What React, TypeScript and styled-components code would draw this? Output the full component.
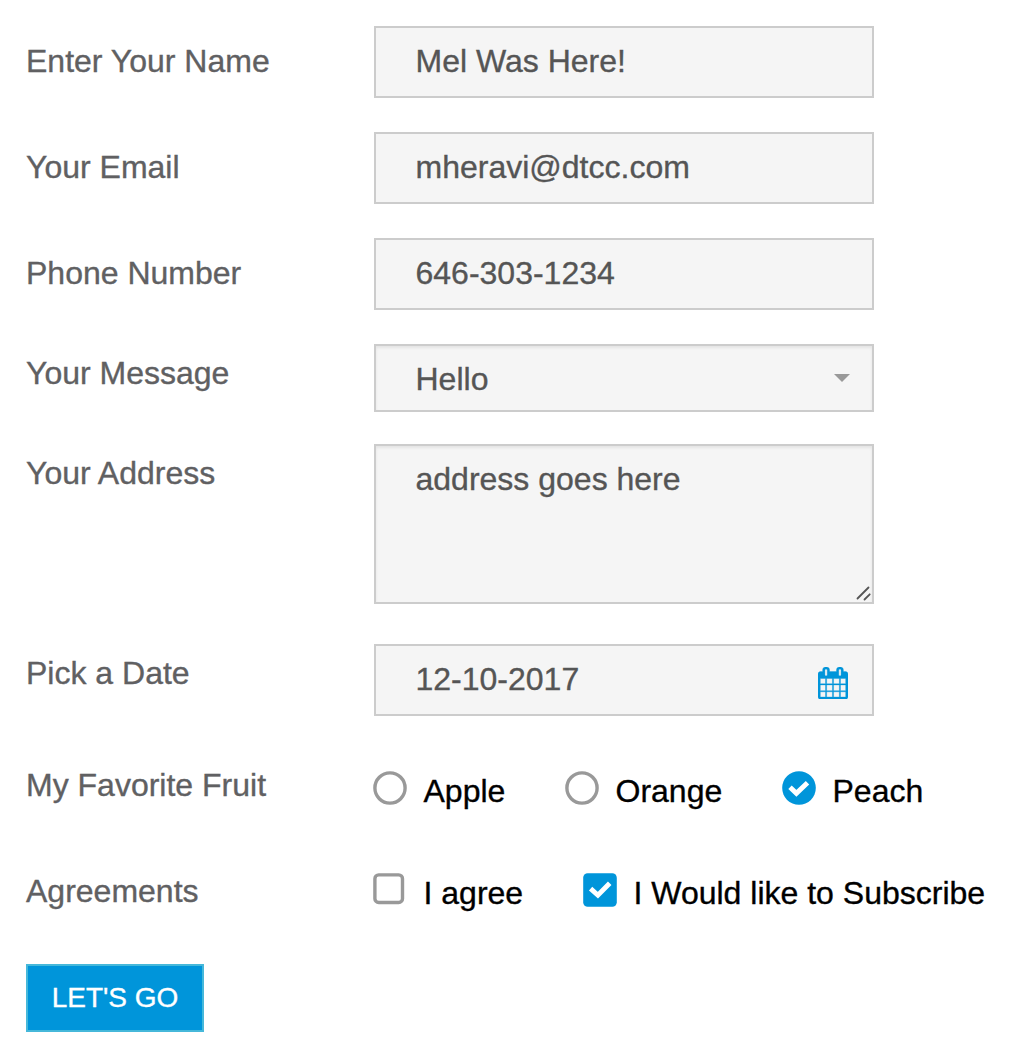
import React from "react";
import styled, { createGlobalStyle } from "styled-components";

const GlobalStyle = createGlobalStyle`
  body {
    margin: 0;
    background: #fff;
    font-family: "Liberation Sans", Arial, sans-serif;
    font-size: 32px;
    line-height: 36px;
    -webkit-text-stroke: 0.35px currentColor;
  }
`;

const Form = styled.main`
  box-sizing: border-box;
  width: 1032px;
  padding: 26px 0 28px 26px;
`;

const Row = styled.div<{ $gap: number }>`
  display: flex;
  align-items: flex-start;
  margin-bottom: ${(p) => p.$gap}px;
`;

const Label = styled.div<{ $top: number }>`
  flex: none;
  width: 348px;
  padding-top: ${(p) => p.$top}px;
  color: #606062;
`;

const Field = styled.div<{ $height?: number; $inset?: boolean }>`
  box-sizing: border-box;
  position: relative;
  display: flex;
  justify-content: space-between;
  align-items: flex-start;
  width: 500px;
  height: ${(p) => p.$height ?? 72}px;
  padding: 15px 24px 0 39.5px;
  border: 2px solid #ccc;
  background: #f5f5f5;
  box-shadow: ${(p) => (p.$inset ? "inset 0 2px 3px rgba(0, 0, 0, 0.07)" : "none")};
  color: #555;
`;

const Arrow = styled.span`
  width: 0;
  height: 0;
  margin-top: 13px;
  margin-right: -2px;
  border: 8px solid transparent;
  border-top-color: #999;
  border-bottom: 0;
`;

const Grip = styled.svg`
  position: absolute;
  right: 0;
  bottom: 0;
`;

const CalendarIcon = styled.svg`
  margin-top: 5.5px;
`;

const Options = styled.div<{ $top: number }>`
  display: flex;
  align-items: flex-start;
  padding-top: ${(p) => p.$top}px;
  color: #000;
  white-space: nowrap;
`;

const Option = styled.label<{ $width?: number }>`
  display: grid;
  grid-template-columns: 49.5px auto;
  align-items: start;
  width: ${(p) => (p.$width ? `${p.$width}px` : "auto")};
`;

const OptionText = styled.span`
  padding-top: 2px;
`;

const Mark = styled.svg`
  display: block;
  margin-left: -1px;
`;

const Submit = styled.button`
  display: block;
  width: 178px;
  height: 68px;
  padding: 0 0 1px;
  border: 2px solid #46b8da;
  background: #0095da;
  color: #fff;
  font: 28px/32px "Liberation Sans", Arial, sans-serif;
  -webkit-text-stroke: 0.35px currentColor;
`;

const Circle = ({ checked }: { checked?: boolean }) => (
  <Mark width="34" height="34" viewBox="0 0 34 34">
    {checked ? (
      <>
        <circle cx="17" cy="17" r="16.8" fill="#0095da" />
        <path d="M8 16.2l6.4 6.1L25.5 11.7" fill="none" stroke="#fff" strokeWidth="4.9" />
      </>
    ) : (
      <circle cx="17" cy="17" r="15.1" fill="none" stroke="#999" strokeWidth="3.4" />
    )}
  </Mark>
);

const Square = ({ checked }: { checked?: boolean }) => (
  <Mark width="34" height="34" viewBox="0 0 34 34">
    {checked ? (
      <>
        <rect x="0.2" y="0.2" width="33.6" height="33.6" rx="4.5" fill="#0095da" />
        <path d="M7.6 15.6l7.3 6.6L26.7 10.2" fill="none" stroke="#fff" strokeWidth="4.9" />
      </>
    ) : (
      <rect x="1.9" y="1.9" width="27.6" height="27.6" rx="3.8" fill="none" stroke="#999" strokeWidth="3.4" />
    )}
  </Mark>
);

const Calendar = () => (
  <CalendarIcon
    width="30"
    height="32.3"
    viewBox="64 0 1664 1792"
    fill="#0095da"
    stroke="#0095da"
    strokeWidth="18"
  >
    <path d="M192 1664h288v-288h-288v288zm352 0h320v-288h-320v288zm-352-352h288v-320h-288v320zm352 0h320v-320h-320v320zm-352-384h288v-288h-288v288zm736 736h320v-288h-320v288zm-384-736h320v-288h-320v288zm768 736h288v-288h-288v288zm-384-352h320v-320h-320v320zm-352-864v-288q0-13-9.5-22.5t-22.5-9.5h-64q-13 0-22.5 9.5t-9.5 22.5v288q0 13 9.5 22.5t22.5 9.5h64q13 0 22.5-9.5t9.5-22.5zm736 864h288v-320h-288v320zm-384-384h320v-288h-320v288zm384 0h288v-288h-288v288zm32-480v-288q0-13-9.5-22.5t-22.5-9.5h-64q-13 0-22.5 9.5t-9.5 22.5v288q0 13 9.5 22.5t22.5 9.5h64q13 0 22.5-9.5t9.5-22.5zm384-64v1280q0 52-38 90t-90 38h-1408q-52 0-90-38t-38-90v-1280q0-52 38-90t90-38h128v-96q0-66 47-113t113-47h64q66 0 113 47t47 113v96h384v-96q0-66 47-113t113-47h64q66 0 113 47t47 113v96h128q52 0 90 38t38 90z" />
  </CalendarIcon>
);

export default function App() {
  return (
    <>
      <GlobalStyle />
      <Form>
        <Row $gap={34}>
          <Label $top={17}>Enter Your Name</Label>
          <Field>Mel Was Here!</Field>
        </Row>
        <Row $gap={34}>
          <Label $top={17}>Your Email</Label>
          <Field>mheravi@dtcc.com</Field>
        </Row>
        <Row $gap={34}>
          <Label $top={17}>Phone Number</Label>
          <Field>646-303-1234</Field>
        </Row>
        <Row $gap={32}>
          <Label $top={11}>Your Message</Label>
          <Field $height={68} $inset>
            Hello
            <Arrow />
          </Field>
        </Row>
        <Row $gap={40}>
          <Label $top={11}>Your Address</Label>
          <Field $height={160} $inset>
            address goes here
            <Grip width="18" height="18" viewBox="0 0 18 18" stroke="#555" strokeWidth="1.8" strokeLinecap="round">
              <path d="M3.5 14.5L14.5 3.5M10.5 15.5L15.7 10.3" />
            </Grip>
          </Field>
        </Row>
        <Row $gap={34}>
          <Label $top={11}>Pick a Date</Label>
          <Field>
            12-10-2017
            <Calendar />
          </Field>
        </Row>
        <Row $gap={64}>
          <Label $top={17}>My Favorite Fruit</Label>
          <Options $top={21}>
            <Option $width={192}>
              <Circle />
              <OptionText>Apple</OptionText>
            </Option>
            <Option $width={217}>
              <Circle />
              <OptionText>Orange</OptionText>
            </Option>
            <Option>
              <Circle checked />
              <OptionText>Peach</OptionText>
            </Option>
          </Options>
        </Row>
        <Row $gap={53}>
          <Label $top={0}>Agreements</Label>
          <Options $top={0}>
            <Option $width={210}>
              <Square />
              <OptionText>I agree</OptionText>
            </Option>
            <Option>
              <Square checked />
              <OptionText>I Would like to Subscribe</OptionText>
            </Option>
          </Options>
        </Row>
        <Submit type="button">LET'S GO</Submit>
      </Form>
    </>
  );
}
